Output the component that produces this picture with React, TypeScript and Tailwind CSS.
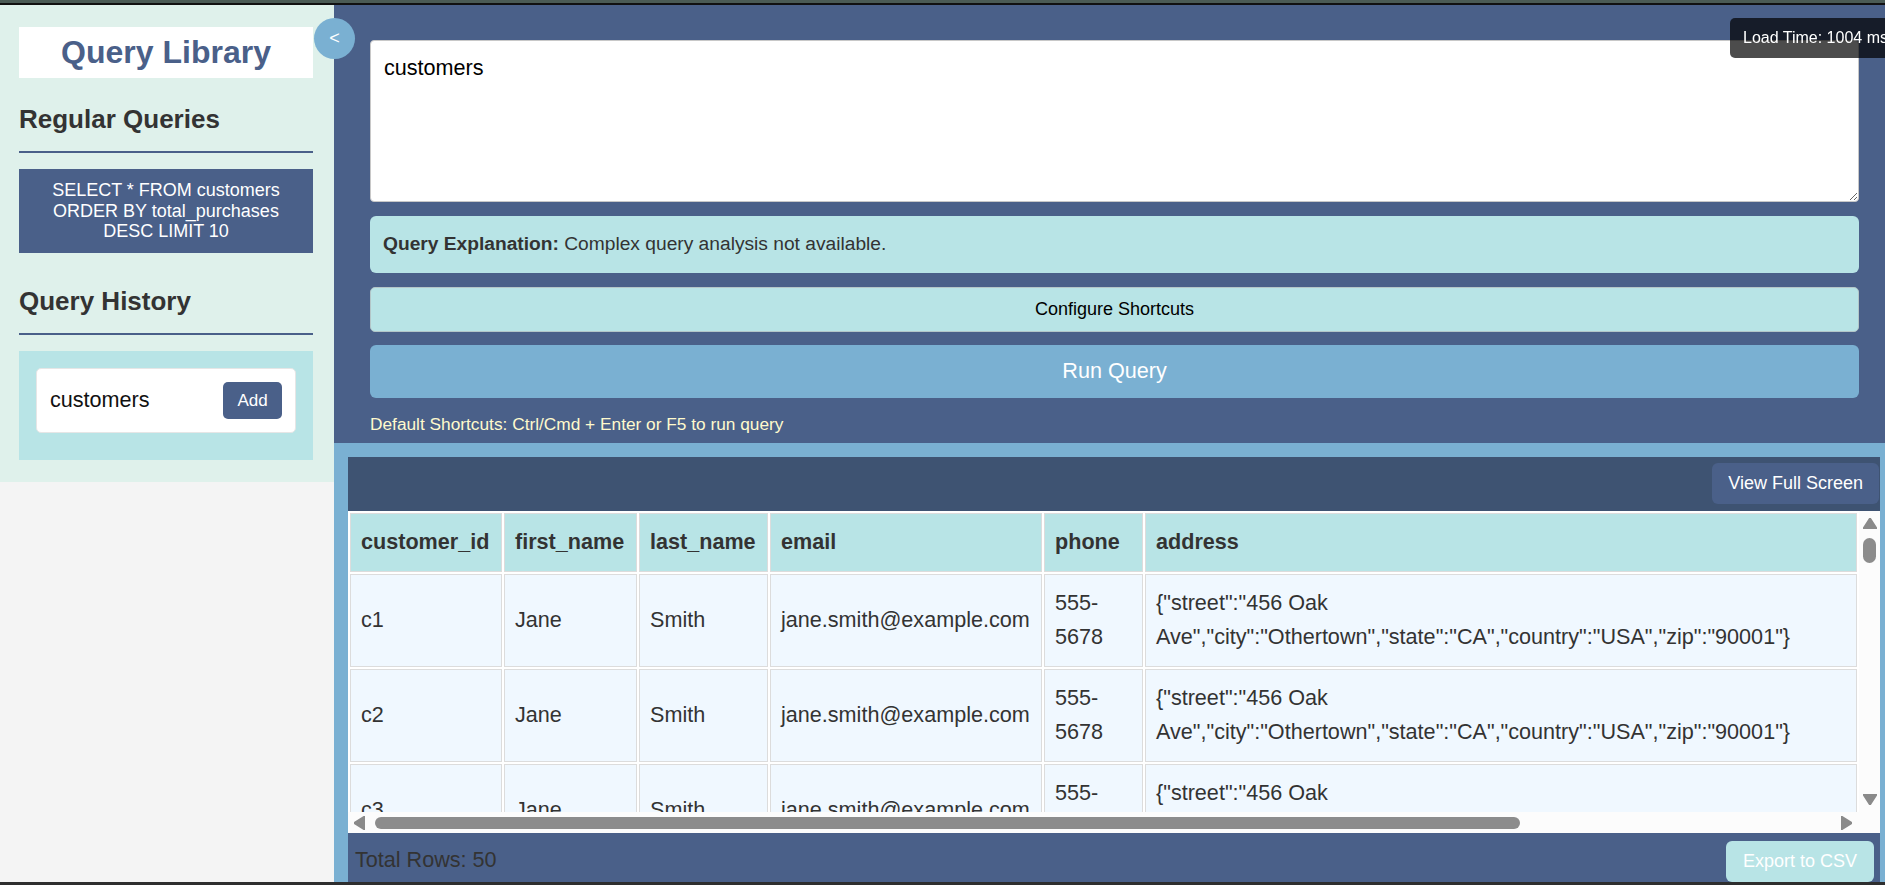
import React from 'react';

const headers = ['customer_id', 'first_name', 'last_name', 'email', 'phone', 'address'];
const widths = ['w-[152px]', 'w-[133px]', 'w-[129px]', 'w-[272px]', 'w-[99px]', 'w-[712px]'];

const address = '{"street":"456 Oak Ave","city":"Othertown","state":"CA","country":"USA","zip":"90001"}';

const rows = ['c1', 'c2', 'c3', 'c4', 'c5'].map((id) => ({
  customer_id: id,
  first_name: 'Jane',
  last_name: 'Smith',
  email: 'jane.smith@example.com',
  phone: '555-5678',
  address,
}));

function Tri({ dir }: { dir: 'up' | 'down' | 'left' | 'right' }) {
  const pts =
    dir === 'up'
      ? '7,0 14,11 0,11'
      : dir === 'down'
        ? '0,0 14,0 7,11'
        : dir === 'left'
          ? '11,0 11,14 0,7'
          : '0,0 11,7 0,14';
  const w = dir === 'up' || dir === 'down' ? 14 : 11;
  const h = dir === 'up' || dir === 'down' ? 11 : 14;
  return (
    <svg width={w} height={h} viewBox={`0 0 ${w} ${h}`}>
      <polygon points={pts} fill="#8a8a8a" stroke="#8a8a8a" strokeWidth="1.5" strokeLinejoin="round" />
    </svg>
  );
}

function Sidebar() {
  return (
    <aside className="w-[334px] shrink-0 bg-[#f4f4f4]">
      <div className="bg-[#dff1eb] pt-[22px] pb-[22px] pl-[19px] pr-[21px]">
        <h1 className="bg-white text-center text-[32px] font-bold leading-[51px] text-[#4a6089]">Query Library</h1>
        <h2 className="mt-[26px] border-b-2 border-[#4a6089] pb-[17px] text-[26px] font-bold leading-[30px] text-[#333]">
          Regular Queries
        </h2>
        <div className="mt-[16px] bg-[#4a6089] px-[12px] py-[11px] text-center text-[18px] leading-[20.7px] text-white">
          SELECT * FROM customers ORDER BY total_purchases DESC LIMIT 10
        </div>
        <h2 className="mt-[33px] border-b-2 border-[#4a6089] pb-[17px] text-[26px] font-bold leading-[30px] text-[#333]">
          Query History
        </h2>
        <div className="mt-[16px] bg-[#b8e4e6] p-[17px]">
          <div className="mb-[10px] flex items-center justify-between rounded-[5px] border border-[#e6e6e6] bg-white p-[13px]">
            <span className="text-[21.6px] text-[#111]">customers</span>
            <button className="h-[37px] w-[59px] rounded-[5px] bg-[#4a6089] text-[17px] text-white">Add</button>
          </div>
        </div>
      </div>
    </aside>
  );
}

function QueryPanel() {
  return (
    <section className="bg-[#4a6089] pt-[35px] pb-[9px] pl-[36px] pr-[26px]">
      <textarea
        defaultValue="customers"
        className="block h-[162px] w-full rounded-[4px] border border-[#c8c8c8] bg-white px-[13px] py-[14px] text-[21.6px] leading-[25px] text-black outline-none"
      />
      <div className="mt-[14px] flex h-[57px] items-center rounded-[6px] bg-[#b8e4e6] px-[13px] text-[19.2px] text-[#333]">
        <strong>Query Explanation:</strong>&nbsp;Complex query analysis not available.
      </div>
      <button className="mt-[14px] block h-[45px] w-full rounded-[5px] border border-[#b3c6c8] bg-[#b8e4e6] text-[18px] text-black">
        Configure Shortcuts
      </button>
      <button className="mt-[13px] block h-[53px] w-full rounded-[6px] bg-[#7ab0d2] text-[21.6px] text-white">Run Query</button>
      <p className="mt-[16px] text-[17.3px] leading-[20px] text-[#fffacd]">
        Default Shortcuts: Ctrl/Cmd + Enter or F5 to run query
      </p>
    </section>
  );
}

function Results() {
  return (
    <section className="min-h-0 flex-1 overflow-hidden bg-[#7ab0d2] pt-[14px] pl-[14px] pr-[5px]">
      <div className="flex flex-col">
        <div className="flex h-[54px] items-start justify-end bg-[#3e5372] pt-[6px] pr-[1px]">
          <button className="h-[41px] rounded-[6px] bg-[#4a6089] px-[16px] text-[18px] text-white">View Full Screen</button>
        </div>

        <div className="flex h-[301px] bg-[#fcfcfc]">
          <div className="min-w-0 flex-1 overflow-hidden bg-white">
            <table className="w-[1511px] table-fixed border-separate border-spacing-[2px] bg-white text-[21.6px] leading-[1.6] text-[#333]">
              <thead>
                <tr>
                  {headers.map((h, i) => (
                    <th
                      key={h}
                      className={`${widths[i]} border border-[#dcdcdc] bg-[#b8e4e6] px-[10px] py-[11px] text-left font-bold`}
                    >
                      {h}
                    </th>
                  ))}
                </tr>
              </thead>
              <tbody>
                {rows.map((r) => (
                  <tr key={r.customer_id}>
                    {headers.map((h) => (
                      <td key={h} className="border border-[#dcdcdc] bg-[#f0f8ff] px-[10px] py-[11px] align-middle">
                        {r[h as keyof typeof r]}
                      </td>
                    ))}
                  </tr>
                ))}
              </tbody>
            </table>
          </div>
          {/* vertical scrollbar */}
          <div className="flex w-[21px] shrink-0 flex-col items-center bg-[#fcfcfc]">
            <div className="flex h-[21px] items-center justify-center pt-[4px]">
              <Tri dir="up" />
            </div>
            <div className="mt-[6px] h-[25px] w-[13px] rounded-full bg-[#8c8c8c]" />
            <div className="flex-1" />
            <div className="flex h-[21px] items-center justify-center pb-[4px]">
              <Tri dir="down" />
            </div>
          </div>
        </div>

        {/* horizontal scrollbar */}
        <div className="flex h-[21px] items-center bg-[#fcfcfc]">
          <div className="flex w-[21px] justify-center pl-[2px]">
            <Tri dir="left" />
          </div>
          <div className="ml-[6px] h-[12px] w-[1145px] rounded-full bg-[#8c8c8c]" />
          <div className="flex-1" />
          <div className="flex w-[21px] justify-center">
            <Tri dir="right" />
          </div>
          <div className="w-[23px]" />
        </div>

        <div className="flex h-[60px] items-start justify-between bg-[#4a6089] pl-[7px] pr-[6px]">
          <span className="pt-[14px] text-[21.6px] leading-[25px] text-[#333]">Total Rows: 50</span>
          <button className="mt-[8px] h-[41px] rounded-[6px] bg-[#b8e4e6] px-[17px] text-[18px] text-white">Export to CSV</button>
        </div>
      </div>
    </section>
  );
}

export default function App() {
  return (
    <div className="flex h-[885px] w-full flex-col overflow-hidden font-['Liberation_Sans',Arial,sans-serif]">
      <div className="h-[3px] shrink-0 bg-[#4b5b55]" />
      <div className="h-[2px] shrink-0 bg-[#111]" />
      <div className="relative flex min-h-0 flex-1">
        <Sidebar />
        <main className="flex min-w-0 flex-1 flex-col">
          <QueryPanel />
          <Results />
        </main>
        <button className="absolute top-[13px] left-[314px] z-10 flex h-[41px] w-[41px] items-center justify-center rounded-full bg-[#7ab0d2] text-[18px] text-white">
          &lt;
        </button>
      </div>
      <div className="h-[3px] shrink-0 bg-[#2e2e2e]" />
      <div className="fixed top-[18px] left-[1730px] z-50 whitespace-nowrap rounded-[5px] bg-black/70 px-[13px] py-[11px] text-[16px] leading-[18px] text-white">
        Load Time: 1004 ms
      </div>
    </div>
  );
}
